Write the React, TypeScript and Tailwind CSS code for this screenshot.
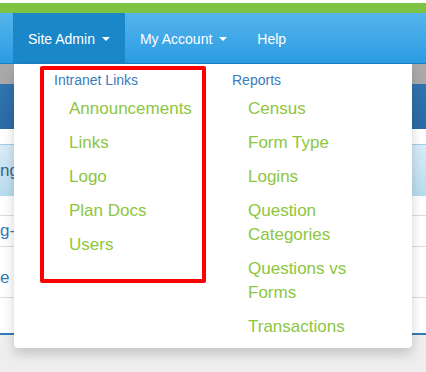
import React from 'react';

// Dropdown menu data: two columns of admin links
const intranetLinks = ['Announcements', 'Links', 'Logo', 'Plan Docs', 'Users'];
const reportLinks = ['Census', 'Form Type', 'Logins', 'Question Categories', 'Questions vs Forms', 'Transactions'];

const Caret: React.FC = () => (
  <span className="ml-[7px] inline-block h-0 w-0 border-x-[4px] border-t-[4px] border-x-transparent border-t-white align-middle" />
);

const MenuColumn: React.FC<{ title: string; links: string[]; width?: string; indent: string }> = ({
  title,
  links,
  width,
  indent,
}) => (
  <div className={`${width ?? ''} pl-[40px]`}>
    <div className="h-[20px] text-[14px] leading-[20px] text-[#3a7cc0]">{title}</div>
    <ul className={`${indent} pt-[2px]`}>
      {links.map((link) => (
        <li key={link} className="w-[140px] py-[5px] text-[17px] leading-[24px] text-[#8dc63f]">
          {link}
        </li>
      ))}
    </ul>
  </div>
);

export default function App() {
  return (
    <div className="relative h-[372px] w-[426px] overflow-hidden bg-[#eeeeee] font-['Liberation_Sans',Arial,sans-serif]">
      {/* Brand stripe */}
      <div className="h-[3px] bg-white" />
      <div className="h-[10px] bg-[#7dc242]" />

      {/* Top navbar */}
      <nav className="flex h-[51px] border-b border-[#1b80c2] bg-gradient-to-b from-[#54b4eb] to-[#299ce3] pl-[13px] text-[14px] text-white">
        <div className="flex items-center bg-[#1a87c8] px-[15px] pt-[2px]">
          Site Admin
          <Caret />
        </div>
        <div className="flex items-center px-[15px] pt-[2px]">
          My Account
          <Caret />
        </div>
        <div className="flex items-center px-[15px] pt-[2px]">Help</div>
      </nav>

      {/* Page content behind the open menu */}
      <div className="h-[20px] bg-[#a9a9a9]" />
      <div className="h-[45px] bg-gradient-to-b from-[#3174b0] to-[#2a6aa4]" />
      <div className="h-[15px] bg-white" />
      <div className="flex h-[52px] items-center border-t border-[#9fcde6] bg-gradient-to-b from-[#d8ecf7] to-[#b7dbee] text-[17px] text-[#36688c]">
        nge
      </div>
      <div className="h-[20px] border-b border-[#dddddd] bg-white" />
      <div className="flex h-[31px] items-center border-b border-[#dddddd] bg-white text-[17px] text-[#337ab7]">
        g-
      </div>
      <div className="flex h-[51px] items-start border-b border-[#dddddd] bg-white pt-[20px] text-[17px] leading-[22px] text-[#337ab7]">
        e
      </div>
      <div className="h-[37px] border-b-2 border-[#337ab7] bg-white" />

      {/* Site Admin dropdown */}
      <div className="absolute left-[14px] top-[64px] flex h-[284px] w-[398px] rounded-b-[4px] bg-white pt-[6px] shadow-[0_6px_12px_rgba(0,0,0,0.175)]">
        <MenuColumn title="Intranet Links" links={intranetLinks} width="w-[178px]" indent="pl-[15px]" />
        <MenuColumn title="Reports" links={reportLinks} indent="pl-[16px]" />
      </div>

      {/* Highlight annotation */}
      <div className="absolute left-[40px] top-[66px] h-[217px] w-[166px] rounded-[2px] border-4 border-[#ff0000]" />
    </div>
  );
}
